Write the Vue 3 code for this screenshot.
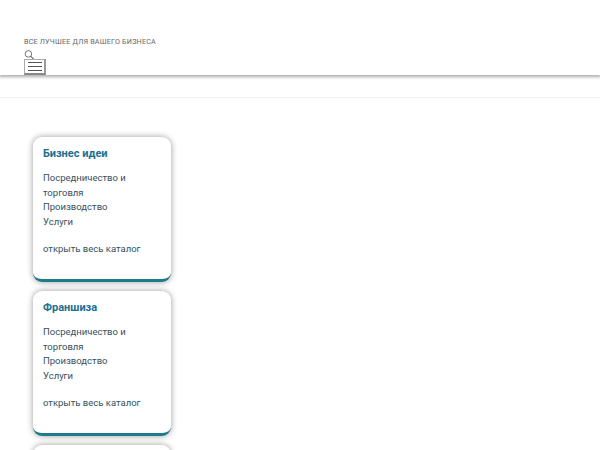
<script setup>
const items = ['Посредничество и торговля', 'Производство', 'Услуги']
const cards = [
  { title: 'Бизнес идеи', items },
  { title: 'Франшиза', items },
  { title: '', items: [] }
]
</script>

<template>
  <div class="page">
    <header class="header">
      <div class="tagline">ВСЕ ЛУЧШЕЕ ДЛЯ ВАШЕГО БИЗНЕСА</div>
      <svg class="search" width="11" height="11" viewBox="0 0 11 11" fill="none" stroke="#666" stroke-width="1">
        <circle cx="4.3" cy="4.3" r="3.6" />
        <path d="M7 7L10.2 10.4" stroke-width="1.2" />
      </svg>
      <button class="burger" type="button">
        <span></span><span></span><span></span>
      </button>
    </header>
    <div class="divider"></div>
    <main class="cards">
      <section v-for="(c, n) in cards" :key="n" class="card">
        <template v-if="c.title">
          <h3 class="title">{{ c.title }}</h3>
          <ul class="list">
            <li v-for="i in c.items" :key="i">{{ i }}</li>
          </ul>
          <a class="all">открыть весь каталог</a>
        </template>
      </section>
    </main>
  </div>
</template>

<style>
html, body { margin: 0; overflow: hidden; background: #fff; }
</style>

<style scoped>
.page {
  width: 600px;
  height: 450px;
  overflow: hidden;
  background: #fff;
  font-family: Roboto, "Noto Sans", sans-serif;
}
.header {
  height: 75px;
  box-sizing: border-box;
  padding: 37px 24px 0;
  box-shadow: 0 1px 3px 1px rgba(0, 0, 0, 0.32);
  display: flex;
  flex-direction: column;
  align-items: flex-start;
}
.tagline {
  font-size: 7.2px;
  line-height: 9px;
  letter-spacing: 0.2px;
  color: #666;
  margin-bottom: 4px;
}
.search { display: block; margin-bottom: -1px; }
.burger {
  width: 22px;
  height: 16px;
  flex: none;
  position: relative;
  box-sizing: border-box;
  padding: 0;
  border-style: solid;
  border-width: 1px 2px 2px 1px;
  border-color: #aaa #999 #888 #aaa;
  background: #fff;
  display: flex;
  flex-direction: column;
  align-items: center;
  justify-content: center;
  gap: 3px;
}
.burger span {
  display: block;
  width: 14px;
  height: 1px;
  background: #555;
}
.divider {
  margin-top: 22px;
  height: 1px;
  background: #eee;
}
.cards {
  padding: 39px 0 0 33px;
  display: flex;
  flex-direction: column;
  gap: 9px;
}
.card {
  width: 138px;
  height: 145px;
  flex: none;
  box-sizing: border-box;
  padding: 10px 10px 0;
  background: #fff;
  border-radius: 9px;
  border-bottom: 3px solid #1f7a8c;
  box-shadow: 0 0 6px rgba(0, 0, 0, 0.4);
}
.title {
  margin: 0 0 10px;
  font-size: 11px;
  line-height: 14px;
  font-weight: 700;
  color: #1a7090;
}
.list {
  list-style: none;
  margin: 0 0 13px;
  padding: 0;
}
.list li, .all {
  font-size: 9.5px;
  line-height: 14.6px;
  color: #34505f;
}
.all { display: block; }
</style>
